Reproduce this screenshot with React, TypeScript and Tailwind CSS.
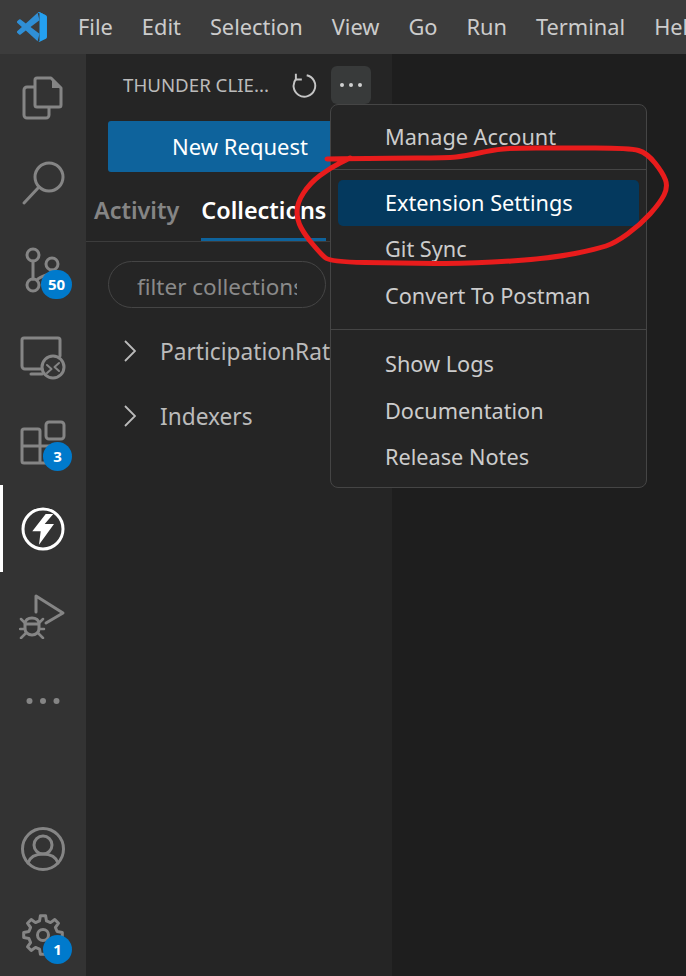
const stroke = {
  fill: "none",
  stroke: "#858585",
  strokeWidth: 3,
  strokeLinecap: "round" as const,
  strokeLinejoin: "round" as const,
};

const gearPath = (() => {
  const cx = 24;
  const cy = 24;
  const teeth = 8;
  const pts: string[] = [];
  for (let i = 0; i < teeth; i++) {
    const a = (i / teeth) * Math.PI * 2 - Math.PI / 2;
    const step = Math.PI / teeth;
    const list: [number, number][] = [
      [14.5, a - step * 0.62],
      [19.5, a - step * 0.34],
      [19.5, a + step * 0.34],
      [14.5, a + step * 0.62],
    ];
    list.forEach(([r, t]) => {
      pts.push(`${(cx + r * Math.cos(t)).toFixed(1)} ${(cy + r * Math.sin(t)).toFixed(1)}`);
    });
  }
  return "M" + pts.join("L") + "Z";
})();

// hand drawn marker line, points read off the picture and smoothed through midpoints
const scribble: [number, number][] = [
  [327, 159], [387, 158], [447, 158], [465, 156], [493, 150], [513, 148], [560, 148], [630, 148],
  [647, 153], [663, 173], [668, 187], [660, 203], [640, 225], [615, 243], [597, 249], [553, 258],
  [470, 264], [400, 263], [330, 262], [320, 253], [305, 235], [297, 220], [297, 203], [310, 183],
  [330, 168], [350, 158],
];
const scribblePath = (() => {
  let d = `M${scribble[0][0]} ${scribble[0][1]}`;
  for (let i = 1; i < scribble.length - 1; i++) {
    const [x, y] = scribble[i];
    const [nx, ny] = scribble[i + 1];
    d += `Q${x} ${y} ${(x + nx) / 2} ${(y + ny) / 2}`;
  }
  const last = scribble[scribble.length - 1];
  return d + `L${last[0]} ${last[1]}`;
})();

const Badge = ({ value, className }: { value: string; className: string }) => (
  <span
    className={`absolute top-[43px] flex h-[29px] items-center justify-center rounded-full bg-[#007acc] text-[15px] font-bold text-white ${className}`}
  >
    {value}
  </span>
);

const FilesIcon = () => (
  <svg width="48" height="48" viewBox="0 0 48 48">
    <path d="M18 5h14l10 10v17a2 2 0 0 1-2 2H18a2 2 0 0 1-2-2V7a2 2 0 0 1 2-2z" {...stroke} />
    <path d="M33 6v9h9z" fill="#858585" />
    <path d="M15 14H8a3 3 0 0 0-3 3v25a3 3 0 0 0 3 3h19a3 3 0 0 0 3-3v-7" {...stroke} />
  </svg>
);

const SearchIcon = () => (
  <svg width="48" height="48" viewBox="0 0 48 48">
    <circle cx="30" cy="18" r="14" {...stroke} />
    <path d="M20 28L5 44" {...stroke} />
  </svg>
);

const GitIcon = () => (
  <svg width="48" height="48" viewBox="0 0 48 48">
    <circle cx="14" cy="9" r="6" {...stroke} />
    <circle cx="33" cy="18" r="6" {...stroke} />
    <circle cx="14" cy="39" r="6" {...stroke} />
    <path d="M14 15v18M33 24c0 6-10 4-15 10" {...stroke} />
  </svg>
);

const RemoteIcon = () => (
  <svg width="48" height="48" viewBox="0 0 48 48">
    <path d="M22 37H6a3 3 0 0 1-3-3V8a2 2 0 0 1 2-2h34a2 2 0 0 1 2 2v16" {...stroke} />
    <path d="M12 42h11" {...stroke} />
    <circle cx="34" cy="35" r="11" {...stroke} />
    <path d="M28 33l4.500 4-4.500 4M40 31l-4.500 4 4.500 4" {...stroke} strokeWidth={2} />
  </svg>
);

const ExtensionsIcon = () => (
  <svg width="48" height="48" viewBox="0 0 48 48">
    <rect x="27" y="4" width="18" height="17" rx="3" {...stroke} />
    <path d="M21 28V13a2 2 0 0 0-2-2H5a2 2 0 0 0-2 2v30a2 2 0 0 0 2 2h31a2 2 0 0 0 2-2V30a2 2 0 0 0-2-2H3M21 28v17" {...stroke} />
  </svg>
);

const ThunderIcon = () => (
  <svg width="48" height="48" viewBox="0 0 48 48">
    <circle cx="24" cy="24" r="20" fill="none" stroke="#ffffff" strokeWidth="3" />
    <path d="M26.7 9L13.3 26.3h8.4L20 39.7 35 19h-9.3l8.6-10z" fill="#ffffff" />
  </svg>
);

const DebugIcon = () => (
  <svg width="48" height="48" viewBox="0 0 48 48">
    <path d="M17 21V5l27 17-17 10" {...stroke} />
    <path d="M6 33c0-4 3-6 7-6s7 2 7 6v5c0 3-3 6-7 6s-7-3-7-6zM7 33h12" {...stroke} />
    <path d="M2 28l4 4M24 28l-4 4M1 38h5M25 38h-5M2 47l5-5M24 47l-5-5" {...stroke} strokeWidth={2.5} />
  </svg>
);

const DotsIcon = () => (
  <svg width="48" height="48" viewBox="0 0 48 48">
    <circle cx="10.5" cy="24" r="3" fill="#858585" />
    <circle cx="24" cy="24" r="3" fill="#858585" />
    <circle cx="37.5" cy="24" r="3" fill="#858585" />
  </svg>
);

const AccountIcon = () => (
  <svg width="48" height="48" viewBox="0 0 48 48">
    <circle cx="24" cy="24" r="20.5" {...stroke} />
    <circle cx="24" cy="20" r="9" {...stroke} />
    <path d="M9 38c2-6 8-9 15-9s13 3 15 9" {...stroke} />
  </svg>
);

const GearIcon = () => (
  <svg width="48" height="48" viewBox="0 0 48 48">
    <path d={gearPath} {...stroke} />
    <circle cx="24" cy="24" r="5.5" {...stroke} />
  </svg>
);

const VSCodeLogo = () => (
  <svg className="shrink-0" width="30" height="30" viewBox="0 0 100 100">
    <path
      d="M96.4 10.8L75.8.9a6.2 6.2 0 0 0-7.1 1.2L29.4 38 12.2 25a4.2 4.2 0 0 0-5.3.2L1.4 30.2a4.2 4.2 0 0 0 0 6.2L16.3 50 1.4 63.6a4.2 4.2 0 0 0 0 6.2l5.5 5a4.2 4.2 0 0 0 5.3.2l17.2-13 39.3 35.9L75 72.7 45.1 50 75 27.3 68.700 2.100z"
      fill="#2f8fd6"
    />
    <path
      d="M75.8.9a6.2 6.2 0 0 0-7.100 1.200 3.600 3.600 0 0 1 6.300 2.600v90.600a3.600 3.600 0 0 1-6.300 2.600 6.200 6.200 0 0 0 7.100 1.200l20.600-9.900a6.200 6.200 0 0 0 3.500-5.600V16.400a6.200 6.200 0 0 0-3.500-5.600z"
      fill="#24a0f0"
    />
  </svg>
);

const activityItems = [
  { icon: <FilesIcon /> },
  { icon: <SearchIcon /> },
  { icon: <GitIcon />, badge: <Badge value="50" className="left-[41px] w-[31px]" /> },
  { icon: <RemoteIcon /> },
  { icon: <ExtensionsIcon />, badge: <Badge value="3" className="left-[43px] w-[29px]" /> },
  { icon: <ThunderIcon />, active: true },
  { icon: <DebugIcon /> },
  { icon: <DotsIcon /> },
];

const menuItems = ["File", "Edit", "Selection", "View", "Go", "Run", "Terminal", "Help"];

const ActivityBar = () => (
  <aside className="flex w-[86px] shrink-0 flex-col bg-[#333333]">
    {activityItems.map((item, index) => (
      <div className="relative flex h-[86.3px] shrink-0 items-center justify-center" key={index}>
        {item.active && <span className="absolute bottom-0 left-0 top-0 w-[3px] bg-white" />}
        {item.icon}
        {item.badge}
      </div>
    ))}
    <div className="relative mt-[61.6px] flex h-[86px] shrink-0 items-center justify-center">
      <AccountIcon />
    </div>
    <div className="relative flex h-[86px] shrink-0 items-center justify-center">
      <GearIcon />
      <Badge value="1" className="left-[43px] w-[29px]" />
    </div>
  </aside>
);

const Sidebar = () => (
  <section className="flex w-[306px] shrink-0 flex-col bg-[#252525]">
    <div className="mt-[12px] flex h-[38px] items-center">
      <span className="ml-[37px] w-[168px] whitespace-nowrap text-[18.7px] text-[#bbbbbb]">THUNDER CLIE...</span>
      <svg width="26" height="26" viewBox="0 0 24 24">
        <path d="M14.500 3a10 10 0 1 1-9.500 3" fill="none" stroke="#c5c5c5" strokeWidth="1.800" />
        <path d="M4.500 1.500v5.500h5.500" fill="none" stroke="#c5c5c5" strokeWidth="1.800" />
      </svg>
    </div>
    <button className="ml-[22px] mt-[17px] h-[51px] w-[264px] rounded-[3px] bg-[#0e639c] text-[22px] text-white">
      New Request
    </button>
    <div className="flex h-[70px] items-end gap-[22px] border-b-[1px] border-[#3c3c3c] pl-[8px]">
      <span className="pb-[13px] text-[23.4px] font-semibold text-[#858585]">Activity</span>
      <span className="border-b-[3px] border-[#0e639c] pb-[10px] text-[23.4px] font-semibold text-white">Collections</span>
    </div>
    <input
      readOnly
      placeholder="filter collections"
      className="ml-[22px] mt-[19px] h-[47px] w-[218px] rounded-full border border-[#454545] bg-transparent px-[28px] pt-[3px] text-[22.5px] outline-none placeholder:text-[#8a8a8a]"
    />
    <div className="mt-[10px] flex flex-col">
      {["ParticipationRate", "Indexers"].map((name) => (
        <div className="flex h-[65px] items-center" key={name}>
          <svg className="ml-[38px] shrink-0" width="12" height="22" viewBox="0 0 12 22">
            <path d="M1 1l10 10L1 21" fill="none" stroke="#bbbbbb" strokeWidth="1.800" />
          </svg>
          <span className="ml-[24px] whitespace-nowrap pt-[4px] text-[22.7px] text-[#bbbbbb]">{name}</span>
        </div>
      ))}
    </div>
  </section>
);

const MenuRow = ({ label, active }: { label: string; active?: boolean }) => (
  <div
    className={`mx-[7px] flex h-[46.7px] items-center rounded-[5px] pl-[47px] text-[21.7px] ${
      active ? "bg-[#04395e] text-white" : "text-[#cccccc]"
    }`}
  >
    {label}
  </div>
);

const Dropdown = () => (
  <div className="absolute left-[330px] top-[104px] flex h-[384px] w-[317px] flex-col rounded-[8px] border border-[#454545] bg-[#252525] pt-[9px]">
    <MenuRow label="Manage Account" />
    <div className="mb-[10px] mt-[8px] h-px bg-[#454545]" />
    <MenuRow label="Extension Settings" active />
    <MenuRow label="Git Sync" />
    <MenuRow label="Convert To Postman" />
    <div className="mb-[11px] mt-[9px] h-px bg-[#454545]" />
    <MenuRow label="Show Logs" />
    <MenuRow label="Documentation" />
    <MenuRow label="Release Notes" />
  </div>
);

const App = () => {
  return (
    <div className="relative flex h-[976px] w-[686px] flex-col overflow-hidden bg-[#1e1e1e] font-['Noto_Sans',sans-serif]">
      <header className="flex h-[54px] shrink-0 items-center overflow-hidden bg-[#3c3c3c] pl-[17px]">
        <VSCodeLogo />
        <nav className="ml-[31px] flex gap-[29px] whitespace-nowrap text-[21.8px] text-[#cccccc]">
          {menuItems.map((item) => (
            <span key={item}>{item}</span>
          ))}
        </nav>
      </header>
      <div className="flex min-h-0 flex-1">
        <ActivityBar />
        <Sidebar />
        <main className="flex-1 bg-[#1e1e1e]" />
      </div>
      <button className="absolute left-[331px] top-[66px] flex h-[38px] w-[40px] items-center justify-center gap-[5px] rounded-[6px] bg-[#383a3a]">
        <span className="h-[4px] w-[4px] rounded-full bg-[#d0d0d0]" />
        <span className="h-[4px] w-[4px] rounded-full bg-[#d0d0d0]" />
        <span className="h-[4px] w-[4px] rounded-full bg-[#d0d0d0]" />
      </button>
      <Dropdown />
      {/* red marker scribble on top of the screenshot */}
      <svg className="pointer-events-none absolute left-0 top-0" width="686" height="976" viewBox="0 0 686 976">
        <path d={scribblePath} fill="none" stroke="#e81c1c" strokeWidth="5" strokeLinecap="round" strokeLinejoin="round" />
      </svg>
    </div>
  );
};

export default App;
